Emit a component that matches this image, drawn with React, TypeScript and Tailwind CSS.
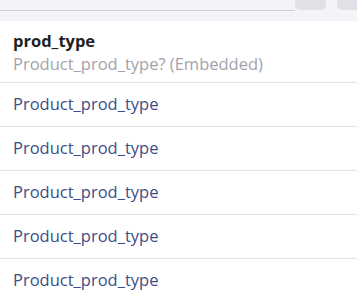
const rows = Array.from({ length: 5 }, () => 'Product_prod_type');

export default function App() {
  return (
    <div className="h-[300px] w-[357px] overflow-hidden bg-white font-['Open_Sans',sans-serif]">
      <div className="flex h-[21px] items-start bg-[#f4f3f8]">
        <div className="h-[11px] flex-1 border-b border-[#cfcdd6]" />
        <div className="h-[10px] w-[31px] rounded-b-[5px] bg-[#e1e0e6]" />
        <div className="ml-[11px] h-[10px] w-[20px] rounded-bl-[5px] bg-[#e1e0e6]" />
      </div>
      <div className="border-b border-[#e4e3e8] px-[13px] pb-[7px] pt-[9px]">
        <div className="text-[16.5px] font-bold leading-[22px] text-[#1f1f24]">prod_type</div>
        <div className="text-[16.5px] leading-[23px] text-[#a3a2ab]">Product_prod_type? (Embedded)</div>
      </div>
      {rows.map((r, i) => (
        <div
          key={i}
          className="flex h-[44px] items-center border-b border-[#e4e3e8] px-[13px] text-[16.5px] text-[#3e4d88]"
        >
          {r}
        </div>
      ))}
    </div>
  );
}
